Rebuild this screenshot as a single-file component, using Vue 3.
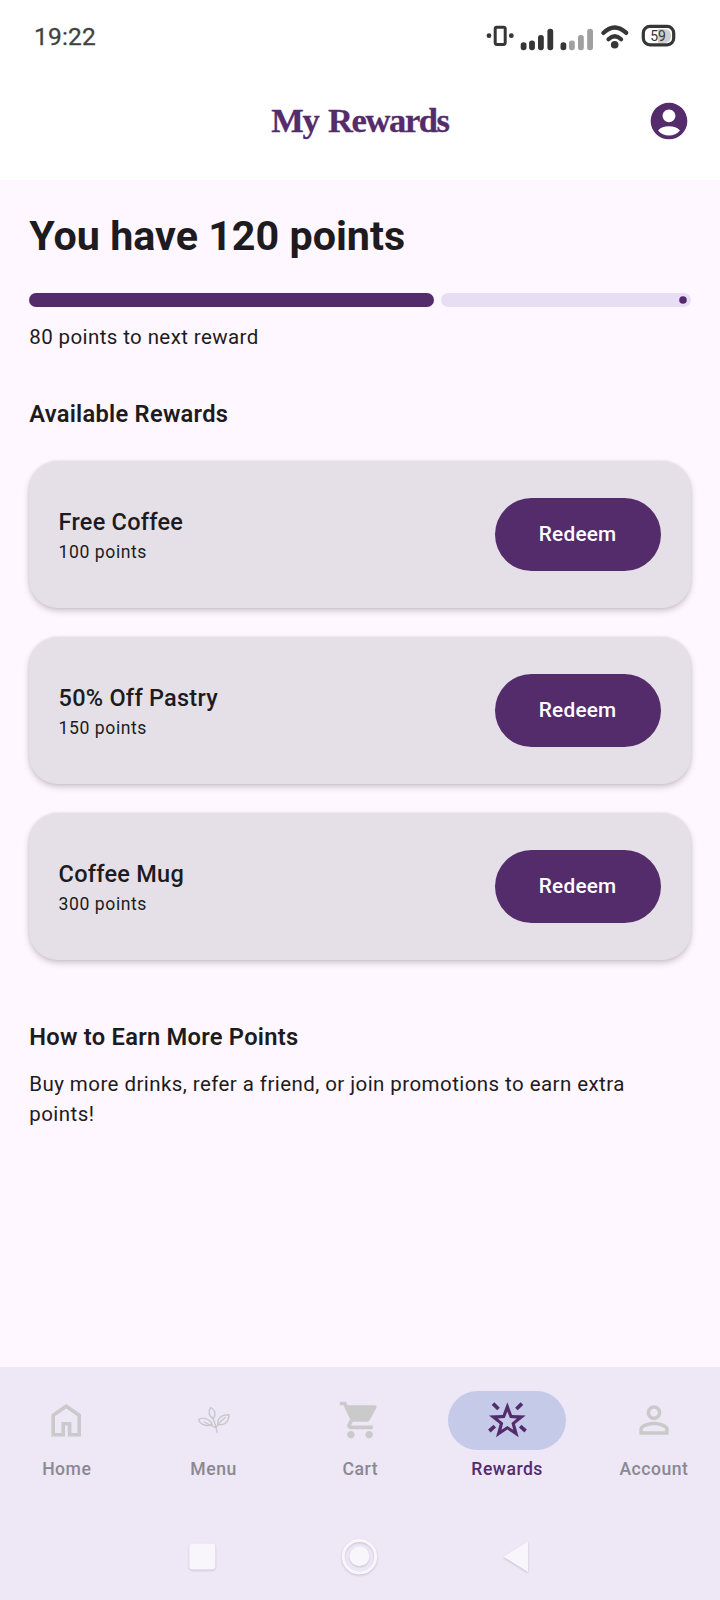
<script setup>
const rewards = [
  { name: 'Free Coffee', points: 100 },
  { name: '50% Off Pastry', points: 150 },
  { name: 'Coffee Mug', points: 300 },
]
const progress = 61.15
</script>

<template>
  <div class="screen">
    <header class="top">
      <div class="status">
        <span class="clock">19:22</span>
        <svg class="status-icons" width="210" height="40" viewBox="480 16 210 40">
          <g fill="#363636">
            <circle cx="489" cy="35.7" r="2.4" />
            <circle cx="511.3" cy="35.7" r="2.4" />
            <rect x="495.2" y="27.2" width="10" height="17.2" rx="1.6" fill="none" stroke="#363636" stroke-width="3" />
            <rect x="520.7" y="42.3" width="5.8" height="8" rx="2.7" />
            <rect x="529.1" y="40.5" width="5.8" height="9.8" rx="2.7" />
            <rect x="538" y="35" width="5.8" height="15.3" rx="2.7" />
            <rect x="547.4" y="28.8" width="5.8" height="21.5" rx="2.7" />
            <rect x="560.5" y="42.3" width="5.8" height="8" rx="2.7" />
          </g>
          <g fill="#a0a0a0">
            <rect x="569" y="40.5" width="5.8" height="9.8" rx="2.7" />
            <rect x="578" y="35" width="5.8" height="15.3" rx="2.7" />
            <rect x="587.2" y="28.8" width="5.8" height="21.5" rx="2.7" />
          </g>
          <g fill="none" stroke="#363636" stroke-width="4.2" stroke-linecap="round">
            <path d="M603.3 32.9Q614.7 22 626.3 32.9" />
            <path d="M608.5 39.2Q614.7 33.2 621.1 39.2" />
          </g>
          <circle cx="614.7" cy="44.7" r="3.8" fill="#363636" />
          <path d="M658 29h6q7 0 7 7t-7 7h-6z" fill="#cfcfcf" />
          <rect x="643.3" y="26.4" width="30.4" height="18.4" rx="6.6" fill="none" stroke="#363636" stroke-width="3.2" />
          <text x="650.2" y="41" class="battery">59</text>
        </svg>
      </div>
      <div class="app-bar">
        <h1 class="title">My Rewards</h1>
        <svg class="profile" width="44" height="44" viewBox="0 0 24 24">
          <path d="M12 2C6.480 2 2 6.480 2 12s4.480 10 10 10 10-4.480 10-10S17.520 2 12 2zm0 3.700c1.930 0 3.500 1.570 3.500 3.500s-1.570 3.500-3.500 3.500-3.500-1.570-3.500-3.500 1.570-3.500 3.500-3.500zM12 19.900c-2.400 0-4.500-.95-5.950-2.700C7.300 15.600 9.500 14.900 12 14.900s4.700.7 5.950 2.300C16.500 18.950 14.400 19.900 12 19.900z" />
        </svg>
      </div>
    </header>

    <main class="content">
      <h2 class="headline">You have 120 points</h2>
      <div class="progress">
        <div class="done" :style="{ width: progress + '%' }"></div>
        <div class="rest">
          <svg class="stop" width="8" height="8" viewBox="0 0 8 8"><circle cx="4" cy="4" r="3.800" /></svg>
        </div>
      </div>
      <p class="body next">80 points to next reward</p>

      <h3 class="section">Available Rewards</h3>
      <div class="cards">
        <article v-for="r in rewards" :key="r.name" class="card">
          <div>
            <div class="name">{{ r.name }}</div>
            <div class="cost">{{ r.points }} points</div>
          </div>
          <button class="redeem">Redeem</button>
        </article>
      </div>

      <h3 class="section earn">How to Earn More Points</h3>
      <p class="body info">Buy more drinks, refer a friend, or join promotions to earn extra points!</p>
    </main>

    <footer class="bottom">
      <nav class="tabs">
        <a class="tab">
          <span class="pill">
            <svg width="44" height="44" viewBox="0 0 44 44" fill="none" stroke="#cacaca" stroke-width="3.600">
              <path d="M8.200 17.200L21.200 8.300l13 8.900V36.800H24.600V25.700H18.200V36.800H8.200z" />
            </svg>
          </span>
          <span class="label">Home</span>
        </a>
        <a class="tab">
          <span class="pill">
            <svg width="44" height="44" viewBox="0.700 0 44 44" fill="none" stroke="#c9c7cc" stroke-width="1.400" stroke-linecap="round">
              <path d="M25.800 34.500Q25 28 21.500 20M24.500 29.500Q20 28 13 24M24.900 29.500Q27 25 34 19.500" />
              <path d="M19.500 9.500C16.500 13 17.500 18.500 22 20.500C25 16.500 24 12 19.500 9.500z" />
              <path d="M7.500 21.500C10 19 18 20 21 26.500C16 28.500 9 27.500 7.500 21.500z" />
              <path d="M37.500 16.800C30 16.800 26 20 26.500 26.500C34 28 38 23 37.500 16.800z" />
            </svg>
          </span>
          <span class="label">Menu</span>
        </a>
        <a class="tab">
          <span class="pill">
            <svg width="44" height="44" viewBox="0 0 24 24" fill="#cacaca">
              <path d="M7 18c-1.100 0-1.990.9-1.990 2S5.900 22 7 22s2-.9 2-2-.9-2-2-2zM1 2v2h2l3.600 7.590-1.350 2.450c-.16.280-.25.610-.25.960 0 1.100.9 2 2 2h12v-2H7.420c-.14 0-.25-.11-.25-.25l.03-.12.9-1.630h7.450c.75 0 1.410-.41 1.750-1.030l3.580-6.490c.08-.14.120-.31.120-.48 0-.55-.45-1-1-1H5.210l-.94-2H1zm16 16c-1.100 0-1.990.9-1.990 2s.89 2 1.990 2 2-.9 2-2-.9-2-2-2z" />
            </svg>
          </span>
          <span class="label">Cart</span>
        </a>
        <a class="tab active">
          <span class="pill">
            <svg width="44" height="44" viewBox="0 0 44 44">
              <path fill="#542c6c" fill-rule="evenodd" d="M22.350 4.300L27.050 17.100L40.700 17.600L29.960 26.100L33.700 39.200L22.350 31.600L11 39.200L14.740 26.100L4 17.600L17.650 17.100zM22.350 13.600L19.800 20L12.840 20.500L18.200 25L16.500 31.700L22.350 28L28.200 31.700L26.500 25L31.860 20.500L24.900 20z" />
              <path fill="none" stroke="#542c6c" stroke-width="3.700" d="M8 5.600L13.500 11M36.900 5.600L31.400 11M4.300 33L9.800 28.200M40.600 33L35.200 28.200" />
            </svg>
          </span>
          <span class="label">Rewards</span>
        </a>
        <a class="tab">
          <span class="pill">
            <svg width="44" height="44" viewBox="0 0 24 24" fill="#cacaca">
              <path d="M12 5.900c1.160 0 2.100.94 2.100 2.100s-.94 2.100-2.100 2.100S9.900 9.160 9.900 8s.94-2.100 2.100-2.100m0 9c2.970 0 6.100 1.460 6.100 2.100v1.100H5.900V17c0-.64 3.130-2.100 6.100-2.100M12 4C9.790 4 8 5.790 8 8s1.790 4 4 4 4-1.790 4-4-1.790-4-4-4zm0 9c-2.670 0-8 1.340-8 4v3h16v-3c0-2.660-5.330-4-8-4z" />
            </svg>
          </span>
          <span class="label">Account</span>
        </a>
      </nav>
      <svg class="system" width="720" height="86" viewBox="0 1514 720 86">
        <g fill="#f8f6fb">
          <rect x="189.300" y="1543.500" width="26" height="26" rx="3.500" />
          <circle cx="359.500" cy="1556.300" r="10" />
          <circle cx="359.500" cy="1556.700" r="16.200" fill="none" stroke="#f8f6fb" stroke-width="3" />
          <path d="M503.500 1556.700L528 1541.500V1572z" />
        </g>
      </svg>
    </footer>
  </div>
</template>

<style>
body { background: #fef7ff; }
</style>

<style scoped>
.screen { width: 720px; height: 1600px; display: flex; flex-direction: column; background: #fef7ff; color: #1d1b20; font-family: Roboto, sans-serif; overflow: hidden; }
h1, h2, h3, p { margin: 0; }
.top { height: 180px; background: #fff; flex: none; }
.status { height: 73px; display: flex; justify-content: space-between; padding: 0 30px 0 34px; }
.clock { font-size: 24.500px; line-height: 73px; color: #424242; font-weight: 400; letter-spacing: .2px; -webkit-text-stroke: .3px #424242; }
.status-icons { margin-top: 16px; }
.battery { font: 400 14px Roboto, sans-serif; fill: #363636; }
.app-bar { height: 96px; display: grid; grid-template-columns: 1fr auto 1fr; align-items: center; padding: 0 29px; }
.title { grid-column: 2; font: bold 34.500px/44px "Liberation Serif", serif; letter-spacing: -1.400px; word-spacing: 2.500px; color: #542c6c; -webkit-text-stroke: .3px #542c6c; padding-bottom: 2px; }
.profile { justify-self: end; fill: #542c6c; }
.content { flex: 1; padding: 30px 29.300px 0; }
.headline { font-size: 41.250px; line-height: 53px; font-weight: 700; }
.progress { display: flex; gap: 7.300px; margin-top: 29.700px; height: 14.600px; }
.done { background: #542c6c; border-radius: 8px; }
.rest { flex: 1; background: #e7def5; border-radius: 8px; display: flex; justify-content: flex-end; align-items: center; padding-right: 3.800px; }
.stop { flex: none; fill: #542c6c; }
.body { font-size: 20.500px; line-height: 30px; letter-spacing: .39px; }
.next { margin-top: 14.300px; }
.info { letter-spacing: .43px; }
.section { font-size: 23.700px; line-height: 35px; font-weight: 600; letter-spacing: .25px; margin-top: 45.500px; }
.cards { display: flex; flex-direction: column; gap: 29.300px; margin-top: 28.900px; }
.card { height: 146.700px; box-sizing: border-box; border-radius: 29.300px; background: #e5e0e7; padding: 0 29.300px; display: flex; align-items: center; justify-content: space-between; box-shadow: 0 3px 6px rgba(0, 0, 0, .2), 0 0 3px rgba(0, 0, 0, .08); }
.name { font-size: 23.500px; line-height: 35px; font-weight: 500; letter-spacing: .24px; padding-top: 2px; }
.cost { font-size: 17.600px; line-height: 25px; letter-spacing: .56px; }
.redeem { width: 166.600px; height: 73.300px; border: 0; padding: 0 1px 0 0; border-radius: 37px; background: #542c6c; color: #fff; font: 500 20.800px Roboto, sans-serif; letter-spacing: .2px; }
.earn { margin-top: 60px; margin-bottom: 14px; }
.bottom { height: 233px; background: #ede7f6; flex: none; }
.tabs { height: 147px; display: grid; grid-template-columns: repeat(5, 1fr); column-gap: 14.670px; padding: 24px 0 0 .7px; box-sizing: border-box; }
.tab { display: flex; flex-direction: column; align-items: center; }
.pill { width: 117.300px; height: 58.700px; border-radius: 30px; display: flex; align-items: center; justify-content: center; }
.label { font-size: 17.600px; line-height: 24px; margin-top: 7.800px; font-weight: 500; letter-spacing: .5px; color: #8b888f; }
.active .pill { background: #c5cae9; }
.active .label { color: #542c6c; }
.system { display: block; filter: drop-shadow(0 1px 1px rgba(60, 50, 80, .22)); }
</style>
